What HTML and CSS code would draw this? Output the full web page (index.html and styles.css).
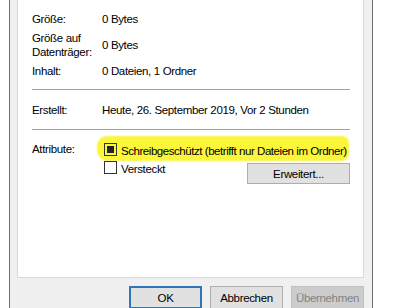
FILE: index.html
```html
<!DOCTYPE html>
<html lang="de">
<head>
    <meta charset="UTF-8">
    <meta name="viewport" content="width=device-width, initial-scale=1.0">
    <title>Eigenschaften</title>
    <link rel="stylesheet" href="styles.css">
</head>
<body>

    <div class="window">
        <div class="panel">
            <div class="row">
                <span class="label">Größe:</span>
                <span class="value">0 Bytes</span>
            </div>
            <div class="row row-two">
                <span class="label">Größe auf<br>Datenträger:</span>
                <span class="value">0 Bytes</span>
            </div>
            <div class="row row-gap">
                <span class="label">Inhalt:</span>
                <span class="value">0 Dateien, 1 Ordner</span>
            </div>

            <hr class="sep">

            <div class="row row-created">
                <span class="label">Erstellt:</span>
                <span class="value">Heute, 26. September 2019, Vor 2 Stunden</span>
            </div>

            <hr class="sep">

            <div class="row row-attr">
                <span class="label">Attribute:</span>
                <span class="mark">
                    <span class="check"><span class="box box-on"></span><span class="check-text">Schreibgeschützt (betrifft nur Dateien im Ordner)</span></span>
                </span>
            </div>
            <div class="row row-hidden">
                <span class="check"><span class="box"></span><span class="check-text">Versteckt</span></span>
                <button class="btn btn-more">Erweitert...</button>
            </div>
        </div>

        <div class="buttons">
            <button class="btn btn-default">OK</button>
            <button class="btn">Abbrechen</button>
            <button class="btn" disabled>Übernehmen</button>
        </div>
    </div>

</body>
</html>
```

FILE: styles.css
```css
body {
    margin: 0;
    background-color: #fff;
    font-family: "Liberation Sans", Arial, sans-serif;
    font-size: 11.5px;
    letter-spacing: -0.35px;
    color: #000;
}
.window {
    box-sizing: border-box;
    width: 364px;
    height: 308px;
    margin-left: 9px;
    padding: 0 8px 0 7px;
    background-color: #f0f0f0;
    border-left: 1px solid #6d6d6d;
    border-right: 1px solid #6d6d6d;
    overflow: hidden;
}
.panel {
    box-sizing: border-box;
    height: 278px;
    padding: 12px 13px 0 14px;
    background-color: #fff;
    border: 1px solid #d9d9d9;
    border-top: none;
}
.row {
    display: flex;
    line-height: 14px;
}
.label {
    width: 70px;
    flex: none;
}
.row-two {
    margin-top: 5px;
    align-items: center;
}
.row-gap {
    margin-top: 5px;
}
.sep {
    margin: 11px 0 0;
    height: 0;
    border: 0;
    border-top: 1px solid #a0a0a0;
}
.row-created {
    margin-top: 13px;
}
.row-created + .sep {
    margin-top: 12px;
}
.row-attr {
    height: 14px;
    margin-top: 12px;
}
/* gelber Textmarker */
.mark {
    align-self: flex-start;
    margin: -5px 0 0 -4px;
    padding: 6px 1px 0 6px;
    height: 17px;
    background-color: #fbf63a;
    border-radius: 9px 6px 7px 10px;
    box-shadow: 0 0 2px 1px #fbf63a;
    white-space: nowrap;
    letter-spacing: -0.45px;
}
.check {
    display: flex;
    align-items: flex-start;
    gap: 4px;
}
.check-text {
    padding-top: 1px;
}
.box {
    box-sizing: border-box;
    width: 13px;
    height: 13px;
    border: 1px solid #333;
    background-color: #fff;
    flex: none;
}
.box-on {
    padding: 2px;
    background-clip: content-box;
    background-color: #222;
}
.row-hidden {
    margin-top: 5px;
    padding-left: 72px;
    align-items: flex-start;
}
.btn {
    box-sizing: border-box;
    width: 73px;
    height: 23px;
    padding: 0;
    font-family: inherit;
    font-size: 11.5px;
    letter-spacing: -0.35px;
    color: #000;
    background-color: #e1e1e1;
    border: 1px solid #adadad;
}
.btn-more {
    width: 103px;
    height: 21px;
    margin: 2px 0 0 auto;
}
.btn-default {
    border: 2px solid #2f75b8;
}
.btn:disabled {
    color: #838383;
    background-color: #cccccc;
    border-color: #bfbfbf;
}
.buttons {
    display: flex;
    justify-content: flex-end;
    gap: 8px;
    margin-top: 8px;
}
```
